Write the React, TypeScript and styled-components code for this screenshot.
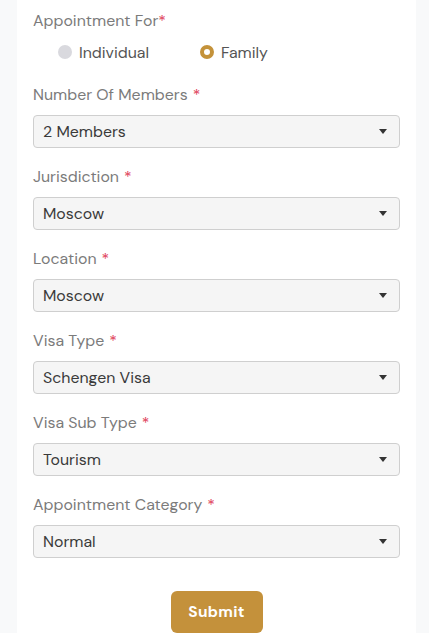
import React from "react";
import styled, { createGlobalStyle } from "styled-components";

const Global = createGlobalStyle`
  html, body { margin: 0; padding: 0; background: #f8f9fa; }
  body { font-family: "DM Sans", Inter, "Noto Sans", sans-serif; }
`;

const Page = styled.div`
  display: flex;
  padding: 0 13px 0 17px;
  min-height: 633px;
  box-sizing: border-box;
`;

const Card = styled.form`
  flex: 1;
  background: #fff;
  padding: 11px 16px 0 16px;
  display: flex;
  flex-direction: column;
`;

const Label = styled.div`
  font-size: 15.9px;
  line-height: 20px;
  color: #7b7b7b;
`;

const Star = styled.span<{ $gap?: boolean }>`
  color: #e0405a;
  margin-left: ${(p) => (p.$gap ? "5px" : "0")};
`;

const RadioRow = styled.div`
  display: flex;
  align-items: center;
  margin: 11px 0 23px 25px;
  height: 20px;
`;

const RadioOption = styled.label`
  display: flex;
  align-items: center;
  gap: 7px;
  font-size: 15.9px;
  color: #555;
  width: 142px;
`;

const RadioDot = styled.span<{ $checked?: boolean }>`
  width: 14px;
  height: 14px;
  border-radius: 50%;
  box-sizing: border-box;
  background: ${(p) => (p.$checked ? "#fff" : "#d9d9de")};
  border: ${(p) => (p.$checked ? "4px solid #c4923a" : "none")};
`;

const Field = styled.div`
  display: flex;
  flex-direction: column;
  gap: 10px;
  margin-bottom: 19px;
`;

const SelectBox = styled.div`
  height: 33px;
  box-sizing: border-box;
  border: 1px solid #cfcfcf;
  border-radius: 4px;
  background: #f5f5f5;
  display: flex;
  align-items: center;
  justify-content: space-between;
  padding: 0 12px 0 9px;
  font-size: 15.9px;
  color: #3a3a3a;
`;

const Arrow = styled.span`
  width: 0;
  height: 0;
  border-left: 4px solid transparent;
  border-right: 4px solid transparent;
  border-top: 5px solid #333;
`;

const Actions = styled.div`
  display: flex;
  justify-content: center;
  margin-top: 14px;
`;

const Submit = styled.button`
  background: #c4913b;
  color: #fff;
  border: none;
  border-radius: 6px;
  width: 92px;
  height: 42px;
  font-family: inherit;
  font-size: 15.5px;
  font-weight: 700;
  letter-spacing: 0.3px;
`;

const fields = [
  ["Number Of Members", "2 Members"],
  ["Jurisdiction", "Moscow"],
  ["Location", "Moscow"],
  ["Visa Type", "Schengen Visa"],
  ["Visa Sub Type", "Tourism"],
  ["Appointment Category", "Normal"],
];

export default function App() {
  return (
    <>
      <Global />
      <Page>
        <Card onSubmit={(e) => e.preventDefault()}>
          <Label>
            Appointment For<Star>*</Star>
          </Label>
          <RadioRow>
            <RadioOption>
              <RadioDot />
              Individual
            </RadioOption>
            <RadioOption>
              <RadioDot $checked />
              Family
            </RadioOption>
          </RadioRow>
          {fields.map(([label, value]) => (
            <Field key={label}>
              <Label>
                {label}
                <Star $gap>*</Star>
              </Label>
              <SelectBox>
                {value}
                <Arrow />
              </SelectBox>
            </Field>
          ))}
          <Actions>
            <Submit type="submit">Submit</Submit>
          </Actions>
        </Card>
      </Page>
    </>
  );
}
